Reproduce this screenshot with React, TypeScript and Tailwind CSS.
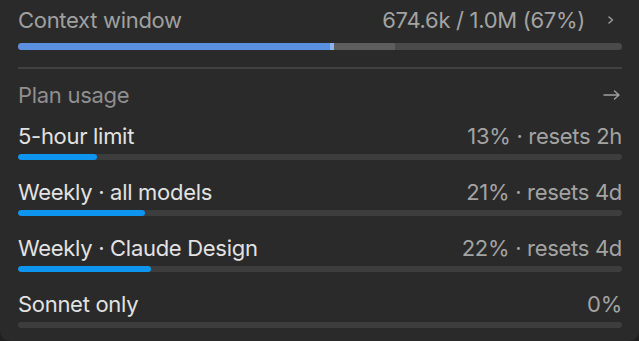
import React from 'react';

type Limit = {
  label: string;
  value: string;
  pct: number;
};

const limits: Limit[] = [
  { label: '5-hour limit', value: '13% · resets 2h', pct: 13 },
  { label: 'Weekly · all models', value: '21% · resets 4d', pct: 21 },
  { label: 'Weekly · Claude Design', value: '22% · resets 4d', pct: 22 },
  { label: 'Sonnet only', value: '0%', pct: 0 },
];

function Chevron() {
  return (
    <svg width="6" height="8" viewBox="0 0 6 8" fill="none" className="ml-[23px] mr-[8px]">
      <path d="M1 1l3.5 3L1 7" stroke="#a3a3a3" strokeWidth="1.4" strokeLinecap="round" strokeLinejoin="round" />
    </svg>
  );
}

function ArrowRight() {
  return (
    <svg width="17" height="10" viewBox="0 0 17 10" fill="none" className="mr-[2px]">
      <path d="M1 5h15M11.5 1L16 5l-4.5 4" stroke="#a0a0a0" strokeWidth="1.4" strokeLinecap="round" strokeLinejoin="round" />
    </svg>
  );
}

function UsageRow({ label, value, pct }: Limit) {
  return (
    <div className="flex flex-col">
      <div className="flex items-center justify-between h-[28px]">
        <span className="text-[#e2e2e2]">{label}</span>
        <span className="text-[#a3a3a3]">{value}</span>
      </div>
      <div className="mt-[4px] h-[6px] rounded-full bg-[#3d3d3d] overflow-hidden">
        <div className="h-full rounded-full bg-[#0d95f0]" style={{ width: `${pct}%` }} />
      </div>
    </div>
  );
}

export default function App() {
  return (
    <div className="w-[639px] h-[341px] bg-[#1f1f1f]">
      <div
        className="h-full bg-[#2a2a2a] rounded-b-[10px] pl-[18px] pr-[17px] pt-[6px] text-[22px] leading-[28px] tracking-[-0.3px]"
        style={{ fontFamily: 'Inter, "Noto Sans", sans-serif' }}
      >
        <div className="flex items-center justify-between h-[28px]">
          <span className="text-[#a0a0a0]">Context window</span>
          <div className="flex items-center">
            <span className="text-[#a3a3a3]">674.6k / 1.0M (67%)</span>
            <Chevron />
          </div>
        </div>
        <div className="mt-[9px] h-[7px] rounded-full bg-[#4a4a4a] flex overflow-hidden">
          <div className="h-full w-[51.7%] bg-[#5b8fe0]" />
          <div className="h-full w-[0.7%] bg-[#8ab4f0]" />
          <div className="h-full w-[10%] bg-[#5e5e5e]" />
        </div>
        <div className="mt-[17px] h-[2px] bg-[#414141]" />

        <div className="mt-[12px] flex items-center justify-between h-[28px]">
          <span className="text-[#8f8f8f]">Plan usage</span>
          <ArrowRight />
        </div>

        <div className="mt-[13px] flex flex-col gap-[18px]">
          {limits.map((l) => (
            <UsageRow key={l.label} {...l} />
          ))}
        </div>
      </div>
    </div>
  );
}
